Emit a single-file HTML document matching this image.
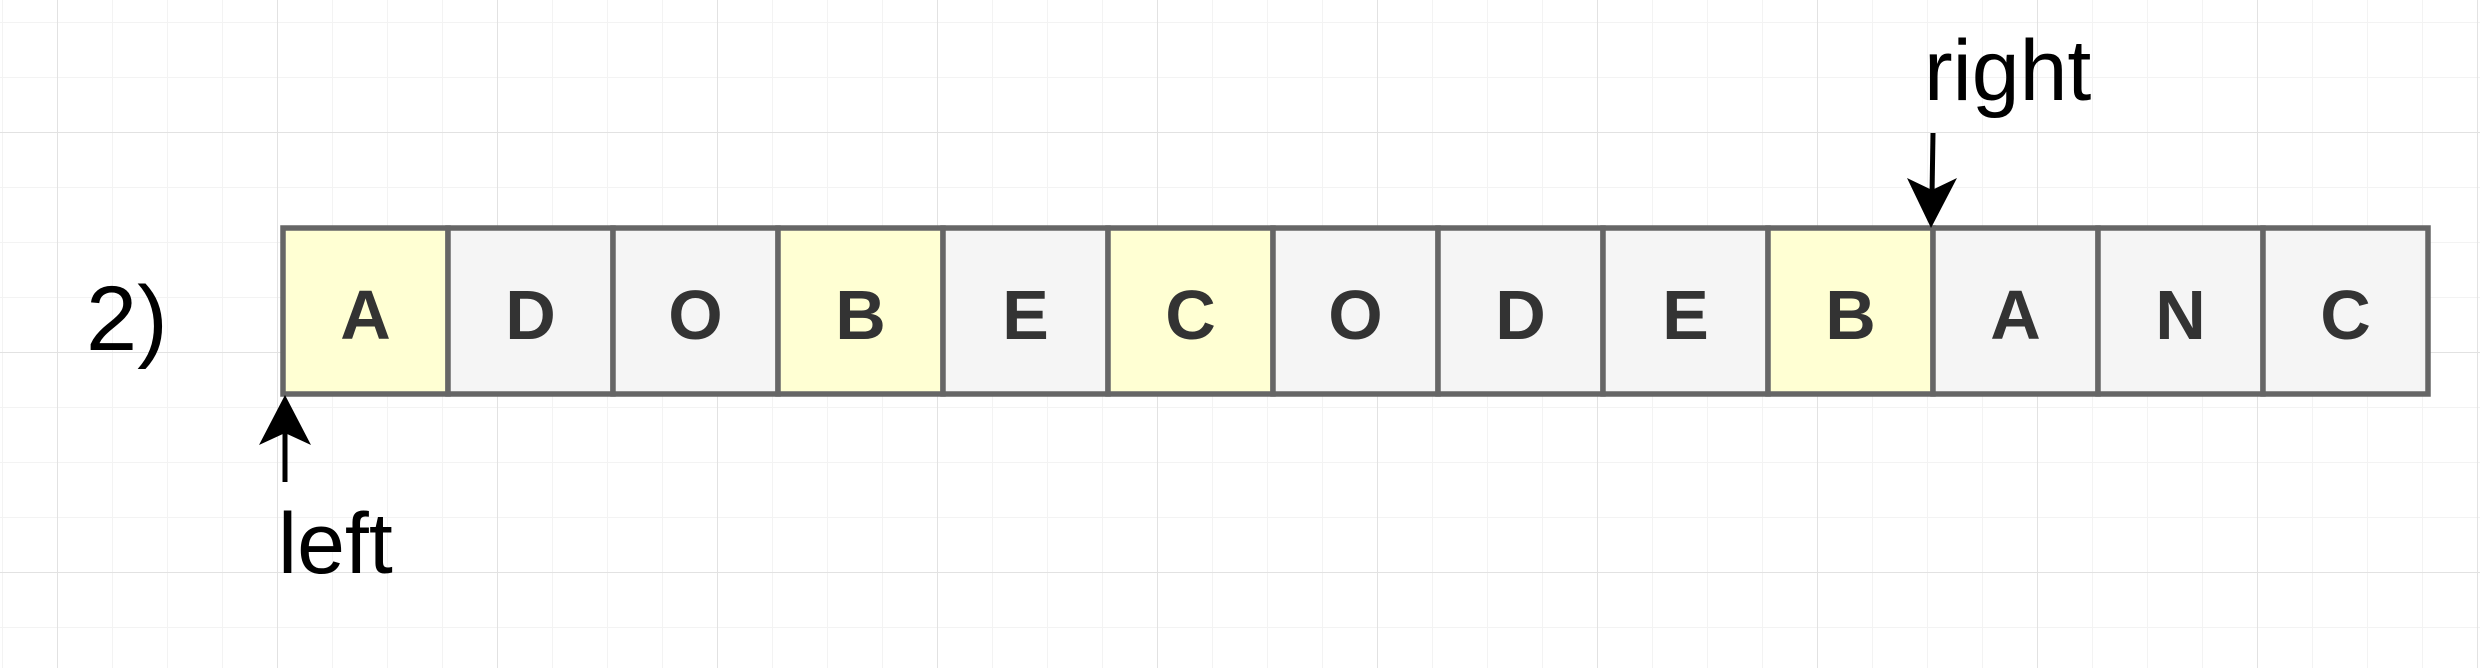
<!DOCTYPE html>
<html><head><meta charset="utf-8"><style>
html,body{margin:0;padding:0;background:#fff;}
svg{display:block;}
</style></head><body>
<svg width="2480" height="668" viewBox="0 0 2480 668" xmlns="http://www.w3.org/2000/svg">
<defs>
<pattern id="minor" x="2" y="22" width="55" height="55" patternUnits="userSpaceOnUse">
<path d="M0 0H55M0 0V55" stroke="#f3f3f3" stroke-width="2" fill="none"/>
</pattern>
<pattern id="major" x="57" y="132" width="220" height="220" patternUnits="userSpaceOnUse">
<path d="M0 0H220M0 0V220" stroke="#e2e2e2" stroke-width="2" fill="none"/>
</pattern>
</defs>
<rect width="2480" height="668" fill="#fff"/>
<rect width="2480" height="668" fill="url(#minor)"/>
<rect width="2480" height="668" fill="url(#major)"/>
<g stroke="#666" stroke-width="5.5">
<rect x="283" y="228" width="165" height="166" fill="#ffffd3"/>
<rect x="448" y="228" width="165" height="166" fill="#f5f5f5"/>
<rect x="613" y="228" width="165" height="166" fill="#f5f5f5"/>
<rect x="778" y="228" width="165" height="166" fill="#ffffd3"/>
<rect x="943" y="228" width="165" height="166" fill="#f5f5f5"/>
<rect x="1108" y="228" width="165" height="166" fill="#ffffd3"/>
<rect x="1273" y="228" width="165" height="166" fill="#f5f5f5"/>
<rect x="1438" y="228" width="165" height="166" fill="#f5f5f5"/>
<rect x="1603" y="228" width="165" height="166" fill="#f5f5f5"/>
<rect x="1768" y="228" width="165" height="166" fill="#ffffd3"/>
<rect x="1933" y="228" width="165" height="166" fill="#f5f5f5"/>
<rect x="2098" y="228" width="165" height="166" fill="#f5f5f5"/>
<rect x="2263" y="228" width="165" height="166" fill="#f5f5f5"/>
</g>
<g font-family="Liberation Sans, sans-serif" font-weight="bold" font-size="70" fill="#333" text-anchor="middle">
<text x="365.5" y="339">A</text>
<text x="530.5" y="339">D</text>
<text x="695.5" y="339">O</text>
<text x="860.5" y="339">B</text>
<text x="1025.5" y="339">E</text>
<text x="1190.5" y="339">C</text>
<text x="1355.5" y="339">O</text>
<text x="1520.5" y="339">D</text>
<text x="1685.5" y="339">E</text>
<text x="1850.5" y="339">B</text>
<text x="2015.5" y="339">A</text>
<text x="2180.5" y="339">N</text>
<text x="2345.5" y="339">C</text>
</g>
<g font-family="Liberation Sans, sans-serif" font-size="86" fill="#000">
<text x="86" y="350" font-size="92">2)</text>
<text x="278" y="573">left</text>
<text x="1924" y="100">right</text>
</g>
<line x1="285" y1="482" x2="285" y2="430" stroke="#000" stroke-width="5"/>
<path d="M285 395 L311 445 L285 433 L259 445 Z" fill="#000"/>
<line x1="1933" y1="133" x2="1932" y2="195" stroke="#000" stroke-width="5"/>
<path d="M1931 228 L1907 178 L1932 190 L1957 178 Z" fill="#000"/>
</svg>
</body></html>
